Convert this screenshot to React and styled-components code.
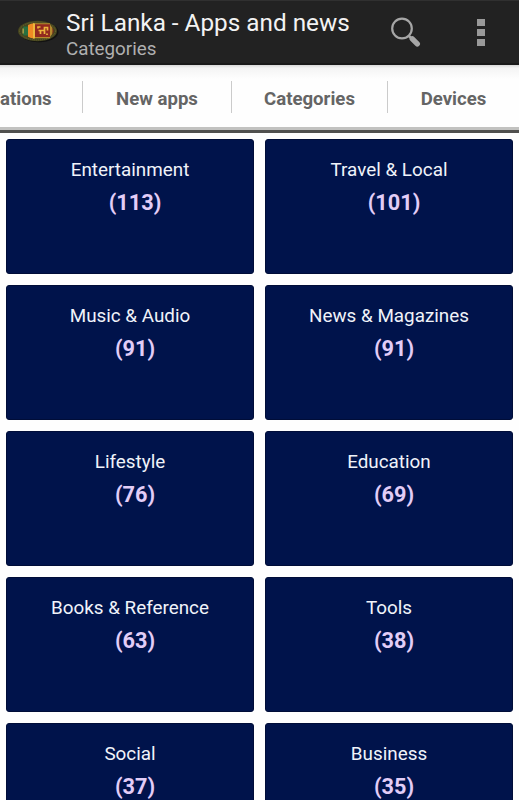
import React from "react";
import styled, { createGlobalStyle } from "styled-components";

const GlobalStyle = createGlobalStyle`
  * {
    box-sizing: border-box;
  }
  body {
    margin: 0;
    background: #fefefe;
    font-family: Roboto, "Liberation Sans", sans-serif;
    overflow: hidden;
  }
`;

const Screen = styled.div`
  width: 519px;
  height: 800px;
  overflow: hidden;
`;

const ActionBar = styled.header`
  height: 65px;
  display: flex;
  background: #222222;
  border-top: 1px solid #303030;
  border-bottom: 2px solid #191919;
`;

const Logo = styled.svg`
  width: 42px;
  height: 24px;
  margin: 18px 7px 0 17px;
`;

const Titles = styled.div`
  flex: 1;
  white-space: nowrap;
`;

const Title = styled.h1`
  margin: 8px 0 0;
  font-size: 24.3px;
  line-height: 28px;
  font-weight: 400;
  color: #f3f3f3;
`;

const Subtitle = styled.div`
  font-size: 18.8px;
  line-height: 25px;
  color: #b0b0b0;
`;

const SearchIcon = styled.svg`
  width: 32px;
  height: 32px;
  margin: 16px 55px 0 0;
`;

const MenuIcon = styled.div`
  width: 8px;
  margin: 18px 34px 0 0;
  display: flex;
  flex-direction: column;
  gap: 3px;
  span {
    height: 7px;
    background: #999999;
  }
`;

const TabBar = styled.nav`
  height: 68px;
  display: flex;
  align-items: flex-start;
  background: linear-gradient(#d8d8d8, #f4f4f4 3px, #fefefe 14px);
  border-bottom: 3px solid #50504e;
  box-shadow: inset 0 -3px 0 #c2c2c0;
`;

const Tab = styled.div`
  width: ${(props) => props.$width}px;
  height: 32px;
  margin-top: 16px;
  flex-shrink: 0;
  text-align: center;
  font-size: 18.6px;
  line-height: 36px;
  font-weight: 700;
  color: #656565;
  border-right: ${(props) => (props.$last ? "none" : "1px solid #cbcbcb")};
  padding-right: ${(props) => props.$end || 0}px;
`;

const Grid = styled.main`
  display: grid;
  grid-template-columns: 248px 248px;
  grid-auto-rows: 135px;
  gap: 11px;
  padding: 6px 6px 0;
`;

const Card = styled.div`
  background: #00134b;
  border: 1px solid #000d38;
  border-radius: 3px;
  padding-top: 17px;
  text-align: center;
`;

const Name = styled.div`
  font-size: 18.85px;
  line-height: 26px;
  color: #f0f3fa;
`;

const Count = styled.div`
  margin-top: 4px;
  padding-left: 10px;
  font-size: 21.7px;
  line-height: 32px;
  font-weight: 700;
  color: #e2cdf7;
`;

const tabs = [
  { label: "ations", width: 83, end: 34 },
  { label: "New apps", width: 149 },
  { label: "Categories", width: 156 },
  { label: "Devices", width: 131 },
];

const categories = [
  { name: "Entertainment", count: 113 },
  { name: "Travel & Local", count: 101 },
  { name: "Music & Audio", count: 91 },
  { name: "News & Magazines", count: 91 },
  { name: "Lifestyle", count: 76 },
  { name: "Education", count: 69 },
  { name: "Books & Reference", count: 63 },
  { name: "Tools", count: 38 },
  { name: "Social", count: 37 },
  { name: "Business", count: 35 },
];

const FlagLogo = () => (
  <Logo viewBox="0 0 42 24">
    <ellipse cx="22" cy="13" rx="19.5" ry="10.3" fill="#111111" />
    <ellipse cx="20.5" cy="12" rx="19.5" ry="10.3" fill="#45451f" />
    <ellipse
      cx="20.5"
      cy="12"
      rx="18"
      ry="9"
      fill="none"
      stroke="#756d36"
      strokeWidth="0.8"
      strokeDasharray="1 1"
    />
    <path d="M6.500 7.500h4.500v9H6.500q-2.500-4.500 0-9z" fill="#28703f" />
    <path d="M5.500 9.500h1.300v5H5.500z" fill="#c3a047" />
    <path d="M11 6q3-1.700 6-1.700v15.200q-3 0-6-1.700z" fill="#f08a24" />
    <path d="M16 4.300h2v15.200h-2z" fill="#edb83c" />
    <path d="M18 5h15v13.500H18z" fill="#92291f" />
    <path d="M18 4.300h15v1H18zM18 18h15v1.200H18z" fill="#b98a2c" />
    <path d="M33 5.500q6 6.500 0 12.500z" fill="#b58a2e" />
    <path d="M35.500 8.500q2.500 3.500 0 7z" fill="#762b1d" />
    <path
      d="M21 9.500v-1.500h2.500M21.500 11.500h6v3.500M23.500 11.500v3.500M27.500 11.500v-3h3v3M30 14.500v1.500"
      fill="none"
      stroke="#edb53d"
      strokeWidth="1.700"
    />
  </Logo>
);

const App = () => {
  return (
    <>
      <GlobalStyle />
      <Screen>
        <ActionBar>
          <FlagLogo />
          <Titles>
            <Title>Sri Lanka - Apps and news</Title>
            <Subtitle>Categories</Subtitle>
          </Titles>
          <SearchIcon viewBox="0 0 32 32">
            <circle
              cx="12"
              cy="11.500"
              r="9.800"
              fill="none"
              stroke="#a6a6a6"
              strokeWidth="2.200"
            />
            <path d="M18.500 18.500l3.500 3.500" stroke="#a6a6a6" strokeWidth="2.500" />
            <path
              d="M22.300 21.800l5 5"
              stroke="#a6a6a6"
              strokeWidth="5.400"
              strokeLinecap="round"
            />
          </SearchIcon>
          <MenuIcon>
            <span />
            <span />
            <span />
          </MenuIcon>
        </ActionBar>
        <TabBar>
          {tabs.map((tab, key) => (
            <Tab
              key={key}
              $width={tab.width}
              $end={tab.end}
              $last={key === tabs.length - 1}
            >
              {tab.label}
            </Tab>
          ))}
        </TabBar>
        <Grid>
          {categories.map((item, key) => (
            <Card key={key}>
              <Name>{item.name}</Name>
              <Count>({item.count})</Count>
            </Card>
          ))}
        </Grid>
      </Screen>
    </>
  );
};

export default App;
